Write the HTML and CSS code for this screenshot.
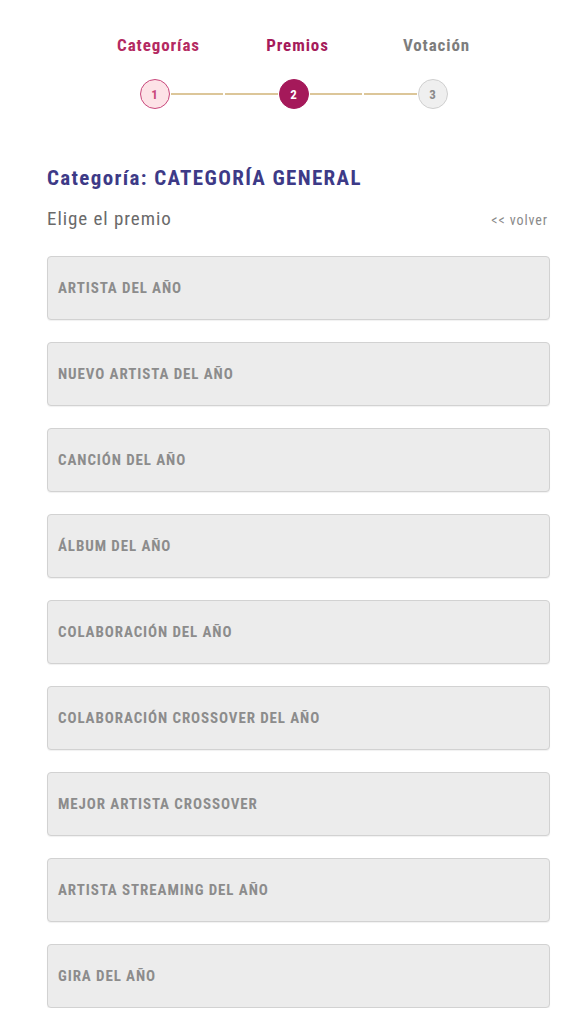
FILE: index.html
```html
<!DOCTYPE html>
<html lang="es">
<head>
<meta charset="utf-8">
<title>Premios</title>
<link rel="stylesheet" href="styles.css">
</head>
<body>
<div class="page">
  <div class="stepper">
    <div class="step done">
      <div class="step-label">Categorías</div>
      <div class="step-track"><span class="line none"></span><span class="dot">1</span><span class="line"></span></div>
    </div>
    <div class="step current">
      <div class="step-label">Premios</div>
      <div class="step-track"><span class="line"></span><span class="dot">2</span><span class="line"></span></div>
    </div>
    <div class="step todo">
      <div class="step-label">Votación</div>
      <div class="step-track"><span class="line"></span><span class="dot">3</span><span class="line none"></span></div>
    </div>
  </div>

  <h2 class="cat-title">Categoría: CATEGORÍA GENERAL</h2>
  <div class="sub-row">
    <span class="sub">Elige el premio</span>
    <a class="back" href="#">&lt;&lt; volver</a>
  </div>

  <div class="awards">
    <button class="award">ARTISTA DEL AÑO</button>
    <button class="award">NUEVO ARTISTA DEL AÑO</button>
    <button class="award">CANCIÓN DEL AÑO</button>
    <button class="award">ÁLBUM DEL AÑO</button>
    <button class="award">COLABORACIÓN DEL AÑO</button>
    <button class="award">COLABORACIÓN CROSSOVER DEL AÑO</button>
    <button class="award">MEJOR ARTISTA CROSSOVER</button>
    <button class="award">ARTISTA STREAMING DEL AÑO</button>
    <button class="award">GIRA DEL AÑO</button>
  </div>
</div>
</body>
</html>
```

FILE: styles.css
```css
html, body {
  margin: 0;
  padding: 0;
  background: #ffffff;
}
body {
  font-family: "Roboto Condensed", Roboto, "Liberation Sans Narrow", sans-serif;
  font-stretch: 75%;
  color: #666;
}
.page {
  padding: 0 26px 0 47px;
}
.stepper {
  display: grid;
  grid-template-columns: repeat(3, 139px);
  margin-left: 38px;
  padding-top: 34px;
}
.step {
  display: flex;
  flex-direction: column;
  align-items: center;
}
.step-label {
  font-size: 17px;
  font-weight: 700;
  line-height: 22px;
  padding-left: 8px;
  letter-spacing: 0.9px;
}
.done .step-label { color: #b42a62; }
.current .step-label { color: #a51b5b; }
.todo .step-label { color: #7d7d7d; }
.step-track {
  display: flex;
  align-items: center;
  width: 100%;
  margin-top: 23px;
}
.line {
  flex: 1;
  height: 1.5px;
  background: #dcc699;
  margin: 0 1px;
}
.line.none { background: transparent; }
.dot {
  width: 28px;
  height: 28px;
  border-radius: 50%;
  display: flex;
  align-items: center;
  justify-content: center;
  font-size: 13px;
  font-weight: 700;
  border: 1.5px solid transparent;
  box-sizing: content-box;
}
.done .dot {
  background: #fde3e7;
  border-color: #c9487c;
  color: #c9487c;
}
.current .dot {
  background: #a5195a;
  border-color: #a5195a;
  color: #fff;
}
.todo .dot {
  background: #efefef;
  border-color: #cfcfcf;
  color: #8a8a8a;
}
.cat-title {
  margin: 57px 0 0;
  font-size: 21px;
  line-height: 24px;
  font-weight: 700;
  color: #3d3a87;
  letter-spacing: 1.35px;
}
.sub-row {
  display: flex;
  justify-content: space-between;
  align-items: baseline;
  margin-top: 17px;
}
.sub {
  font-size: 19px;
  line-height: 24px;
  color: #6a6a6a;
  letter-spacing: 0.95px;
}
.back {
  font-size: 14px;
  color: #8a8a8a;
  text-decoration: none;
  margin-right: 2px;
  letter-spacing: 0.9px;
}
.awards {
  display: flex;
  flex-direction: column;
  gap: 22px;
  margin-top: 25px;
}
.award {
  display: block;
  width: 100%;
  height: 64px;
  box-sizing: border-box;
  text-align: left;
  padding: 0 10px;
  background: #ececec;
  border: 1px solid #d2d2d2;
  border-radius: 4px;
  box-shadow: 0 1px 1px rgba(0,0,0,0.06);
  font-family: inherit;
  font-stretch: 75%;
  font-size: 15px;
  font-weight: 700;
  letter-spacing: 0.9px;
  color: #8c8c8c;
}
```
